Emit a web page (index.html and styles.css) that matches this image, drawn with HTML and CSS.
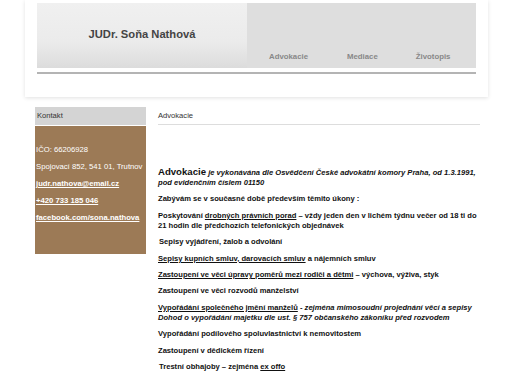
FILE: index.html
```html
<!DOCTYPE html>
<html lang="cs">
<head>
<meta charset="utf-8">
<title>JUDr. Soňa Nathová</title>
<link rel="stylesheet" href="styles.css">
</head>
<body>
<div class="top">
  <div class="band">
    <div class="brand">JUDr. Soňa Nathová</div>
    <nav class="nav">
      <a>Advokacie</a>
      <a>Mediace</a>
      <a>Životopis</a>
    </nav>
  </div>
  <div class="rule"></div>
</div>
<div class="wrap">
  <aside class="side">
    <div class="side-head">Kontakt</div>
    <div class="side-body">
      <p>IČO: 66206928</p>
      <p>Spojovací 852, 541 01, Trutnov</p>
      <p><a class="sl">judr.nathova@email.cz</a></p>
      <p><a class="sl">+420 733 185 046</a></p>
      <p><a class="sl">facebook.com/sona.nathova</a></p>
    </div>
  </aside>
  <main class="main">
    <div class="main-head">Advokacie</div>
    <div class="content">
      <p class="lead"><span class="big">Advokacie</span> <i>je vykonávána dle Osvědčení České advokátní komory Praha, od 1.3.1991,<br>pod evidenčním číslem 01150</i></p>
      <p>Zabývám se v současné době především těmito úkony :</p>
      <p>Poskytování <u>drobných právních porad</u> – vždy jeden den v lichém týdnu večer od 18 ti do<br>21 hodin dle předchozích telefonických objednávek</p>
      <p class="ind">Sepisy vyjádření, žalob a odvolání</p>
      <p><u>Sepisy kupních smluv, darovacích smluv</u> a nájemních smluv</p>
      <p><u>Zastoupení ve věci úpravy poměrů mezi rodiči a dětmi</u> – výchova, výživa, styk</p>
      <p>Zastoupení ve věci rozvodů manželství</p>
      <p><u>Vypořádání společného jmění manželů</u> - <i>zejména mimosoudní projednání věcí a sepisy<br>Dohod o vypořádání majetku dle ust. § 757 občanského zákoníku před rozvodem</i></p>
      <p>Vypořádání podílového spoluvlastnictví k nemovitostem</p>
      <p>Zastoupení v dědickém řízení</p>
      <p class="ind">Trestní obhajoby – zejména <u>ex offo</u></p>
    </div>
  </main>
</div>
</body>
</html>
```
FILE: styles.css
```css
html, body {
  margin: 0;
  padding: 0;
  background: #fff;
  font-family: "Liberation Sans", Arial, sans-serif;
}
.top {
  width: 439px;
  margin-left: 25px;
  padding: 3px 12px 0;
  height: 94px;
  background: #fff;
  box-shadow: 0 1px 4px rgba(0,0,0,0.12);
}
.band {
  display: flex;
  height: 65px;
}
.brand {
  flex: none;
  width: 210px;
  background: linear-gradient(#f0f0f0 0%, #ebebeb 60%, #dcdcdc 100%);
  color: #444;
  font-weight: bold;
  font-size: 11.2px;
  display: flex;
  align-items: center;
  justify-content: center;
  padding-bottom: 3px;
  box-sizing: border-box;
}
.nav {
  flex: 1;
  min-width: 0;
  background: #dedede;
  display: flex;
  align-items: flex-end;
  padding: 0 0 7px 22px;
}
.nav a {
  color: #888;
  font-size: 7.8px;
  font-weight: bold;
  margin-right: 39px;
}
.nav a:nth-child(2) { margin-right: 38px; }
.nav a:last-child { margin-right: 0; }
.rule {
  margin-top: 4px;
  height: 2px;
  background: #b4b4b4;
}
.wrap {
  display: flex;
  margin-top: 10px;
  padding-left: 35px;
}
.side {
  width: 111px;
  flex: none;
}
.side-head {
  background: #d4d4d4;
  color: #333;
  font-size: 7.6px;
  height: 18px;
  line-height: 18px;
  padding-left: 2px;
  margin-bottom: 1px;
}
.side-body {
  background: #9c7a56;
  height: 128px;
  padding: 19px 1px 0;
  box-sizing: border-box;
  color: #fff;
  font-size: 7.7px;
}
.side-body p {
  margin: 0 0 7.5px;
  line-height: 9.5px;
  white-space: nowrap;
}
.sl {
  font-weight: bold;
  text-decoration: underline;
}
.main {
  margin-left: 12px;
  width: 322px;
}
.main-head {
  font-size: 7.6px;
  color: #333;
  padding: 4px 0 4px;
  border-bottom: 1px solid #ddd;
}
.content {
  padding-top: 42px;
  font-size: 7.6px;
  font-weight: bold;
  color: #111;
  width: 345px;
}
.content p {
  margin: 0 0 6.4px;
  line-height: 10px;
  white-space: nowrap;
}
.big {
  font-size: 9.6px;
}
.ind {
  padding-left: 1px;
}
```
